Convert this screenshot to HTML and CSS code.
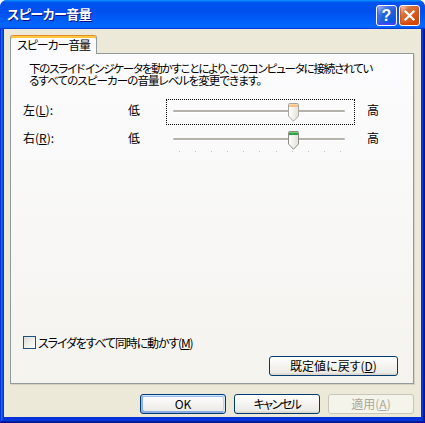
FILE: index.html
```html
<!DOCTYPE html>
<html lang="ja">
<head>
<meta charset="utf-8">
<title>スピーカー音量</title>
<link rel="stylesheet" href="styles.css">
</head>
<body>
<div class="window">
  <div class="titlebar">
    <span class="title">スピーカー音量</span>
    <div class="controls">
      <span class="tbtn help">?</span>
      <span class="tbtn close"><svg viewBox="0 0 19 19" width="19" height="19"><path d="M5.5 5.5 L13.5 13.5 M13.5 5.5 L5.5 13.5" stroke="#fff" stroke-width="2.2" stroke-linecap="square"/></svg></span>
    </div>
  </div>
  <div class="frame">
    <div class="client">
      <div class="tab">スピーカー音量</div>
      <div class="panel">
        <p class="desc"><span class="line1">下のスライド インジケータを動かすことにより、このコンピュータに接続されてい</span><span class="line2">るすべてのスピーカーの音量レベルを変更できます。</span></p>
        <div class="rows">
          <div class="row">
            <span class="label">左(<u>L</u>):</span>
            <span class="lo">低</span>
            <div class="slider focus">
              <div class="track"></div>
              <svg class="thumb" viewBox="0 0 11 19" width="11" height="19">
                <defs><linearGradient id="tb1" x1="0" y1="0" x2="1" y2="0"><stop offset="0" stop-color="#ffffff"/><stop offset="1" stop-color="#e3e2da"/></linearGradient></defs>
                <path d="M1.5 0.5 H9.5 Q10.5 0.5 10.5 1.5 V13 L5.5 18.2 L0.5 13 V1.5 Q0.5 0.5 1.5 0.5 Z" fill="url(#tb1)" stroke="#a8a69c"/>
                <rect x="1" y="1" width="9" height="1" fill="#fbd8a8"/>
                <rect x="1" y="2" width="9" height="2" fill="#f6c089"/>
              </svg>
            </div>
            <span class="hi">高</span>
          </div>
          <div class="row">
            <span class="label">右(<u>R</u>):</span>
            <span class="lo">低</span>
            <div class="slider">
              <div class="track"></div>
              <div class="ticks"><i></i><i></i><i></i><i></i><i></i><i></i><i></i><i></i><i></i><i></i><i></i></div>
              <svg class="thumb" viewBox="0 0 11 19" width="11" height="19">
                <defs><linearGradient id="tb2" x1="0" y1="0" x2="1" y2="0"><stop offset="0" stop-color="#ffffff"/><stop offset="1" stop-color="#e3e2da"/></linearGradient></defs>
                <path d="M1.5 0.5 H9.5 Q10.5 0.5 10.5 1.5 V13 L5.5 18.2 L0.5 13 V1.5 Q0.5 0.5 1.5 0.5 Z" fill="url(#tb2)" stroke="#8c8b84"/>
                <rect x="1" y="1" width="9" height="1" fill="#6fcf7a"/>
                <rect x="1" y="2" width="9" height="2" fill="#2fa34a"/>
              </svg>
            </div>
            <span class="hi">高</span>
          </div>
        </div>
        <div class="spacer"></div>
        <div class="check"><span class="box"></span><span class="check-text">スライダをすべて同時に動かす(<u>M</u>)</span></div>
        <div class="reset-row"><button class="btn reset">既定値に戻す(<u>D</u>)</button></div>
      </div>
      <div class="footer">
        <button class="btn default">OK</button>
        <button class="btn cancel">キャンセル</button>
        <button class="btn" disabled>適用(<u>A</u>)</button>
      </div>
    </div>
  </div>
</div>
</body>
</html>
```
FILE: styles.css
```css
* { box-sizing: border-box; }
html, body { margin: 0; padding: 0; }
body {
  width: 425px;
  height: 423px;
  overflow: hidden;
  background: #ffffff;
  font-family: "Noto Sans CJK JP", "Liberation Sans", sans-serif;
  font-size: 12px;
  color: #000;
  font-feature-settings: "palt";
  white-space: nowrap;
}
u { text-decoration-thickness: 1px; text-underline-offset: 1px; }

.window {
  width: 425px;
  height: 423px;
  display: flex;
  flex-direction: column;
  background: #0831d9;
  border-radius: 7px 7px 0 0;
}
.titlebar {
  height: 29px;
  flex: none;
  display: flex;
  align-items: flex-start;
  border-radius: 7px 7px 0 0;
  background: linear-gradient(180deg, #0997ff, #0053ee 8%, #0050ee 40%, #0066ff 88%, #0066ff 93%, #005bff 95%, #003dd7 96%, #003dd7);
  padding: 0 5px 0 7px;
}
.title {
  margin-top: 5px;
  color: #fff;
  font-weight: bold;
  font-size: 13px;
  line-height: 18px;
  letter-spacing: -0.5px;
  text-shadow: 1px 1px #0f1089;
}
.controls {
  margin-left: auto;
  margin-top: 5px;
  display: flex;
  gap: 2px;
}
.tbtn {
  width: 21px;
  height: 21px;
  border: 1px solid #fff;
  border-radius: 3px;
  display: flex;
  align-items: center;
  justify-content: center;
  color: #fff;
}
.help {
  background: radial-gradient(circle at 90% 90%, #0054e9 0, #2263d5 55%, #4479e4 70%, #a3bbec 90%, #fff);
  box-shadow: inset 0 -1px 2px 1px #4646ff;
  font-family: "Liberation Sans", sans-serif;
  font-weight: bold;
  font-size: 16px;
  line-height: 19px;
}
.close {
  background: radial-gradient(circle at 90% 90%, #cc4600 0, #dc6527 55%, #cd7546 70%, #ffccb2 90%, #fff);
  box-shadow: inset 0 -1px 2px 1px #da4600;
}

.frame {
  flex: 1;
  min-height: 0;
  display: flex;
  padding: 0 4px 6px 4px;
  box-shadow: inset -1px -1px #00138c, inset 1px 0 #0831d9, inset -2px -2px #001ea0, inset 2px 0 #166aee, inset -3px -3px #003bda, inset 3px 0 #0855dd;
}
.client {
  flex: 1;
  min-width: 0;
  background: #ece9d8;
  display: flex;
  flex-direction: column;
  padding: 6px 7px 0 6px;
}
.tab {
  align-self: flex-start;
  position: relative;
  z-index: 1;
  width: 87px;
  height: 19px;
  margin-bottom: -1px;
  padding: 1px 0 0 6px;
  line-height: 16px;
  letter-spacing: -1.1px;
  background: #fcfcfe;
  border: 1px solid #919b9c;
  border-bottom: none;
  border-top: 1px solid #e68b2c;
  border-radius: 3px 3px 0 0;
  box-shadow: inset 0 2px #ffc83c;
}
.panel {
  height: 331px;
  flex: none;
  min-width: 0;
  overflow: hidden;
  display: flex;
  flex-direction: column;
  background: linear-gradient(180deg, #fcfcfe, #f4f3ee);
  border: 1px solid #919b9c;
  box-shadow: 1px 1px 0 #d6d3c6;
}
.desc {
  margin: 8px 0 0 18px;
  font-size: 11.5px;
  line-height: 12px;
  display: flex;
  flex-direction: column;
}
.line1 { letter-spacing: -1.2px; }
.line2 { letter-spacing: -0.9px; }
.rows {
  margin-top: 13px;
  padding-left: 12px;
  display: flex;
  flex-direction: column;
  gap: 2px;
}
.row {
  display: grid;
  grid-template-columns: 105px 38px 189px 12px auto;
  height: 26px;
  align-items: center;
}
.hi { grid-column: 5; }
.label, .lo, .hi { line-height: 14px; margin-top: -4px; }
.slider {
  position: relative;
  height: 26px;
  border: 1px solid transparent;
}
.slider.focus { border: 1px dotted #000; }
.track {
  margin: 10px 0 0 6px;
  width: 172px;
  height: 2px;
  background: #b4b2aa;
  border-radius: 1px;
  box-shadow: 0 1px 0 #ffffff;
}
.ticks {
  margin: 11px 0 0 12px;
  width: 162px;
  display: flex;
  justify-content: space-between;
}
.ticks i {
  display: block;
  width: 1px;
  height: 1px;
  background: #c4c4c0;
}
.thumb {
  position: absolute;
  left: 121px;
  top: 3px;
}
.spacer { flex: 1; }
.check {
  display: flex;
  align-items: center;
  gap: 2px;
  margin: 0 0 7px 12px;
  height: 13px;
  line-height: 13px;
}
.check-text { letter-spacing: -1.15px; }
.box {
  width: 13px;
  height: 13px;
  border: 1px solid #1c5180;
  background: linear-gradient(135deg, #dcdcd7, #ffffff);
}
.reset-row {
  display: flex;
  justify-content: flex-end;
  margin: 0 15px 7px 0;
}
.btn {
  font-family: inherit;
  font-size: 12px;
  font-feature-settings: "palt";
  color: #000;
  height: 20px;
  line-height: 16px;
  padding: 0;
  border: 1px solid #003c74;
  border-radius: 3px;
  background: linear-gradient(180deg, #ffffff, #ecebe6 86%, #d6d0c5);
}
.btn.reset { width: 129px; }
.btn.cancel { letter-spacing: -1.5px; }
.btn.default {
  box-shadow: inset -1px 1px #cee7ff, inset 1px 2px #98b8ea, inset -2px 2px #bcd4f6, inset 1px -1px #89ade4, inset 2px -2px #89ade4;
}
.btn:disabled {
  border-color: #c9c7ba;
  background: #f5f4ea;
  color: #aca899;
}
.footer {
  margin-top: 10px;
  display: flex;
  justify-content: flex-end;
  gap: 8px;
}
.footer .btn { width: 86px; }
```
